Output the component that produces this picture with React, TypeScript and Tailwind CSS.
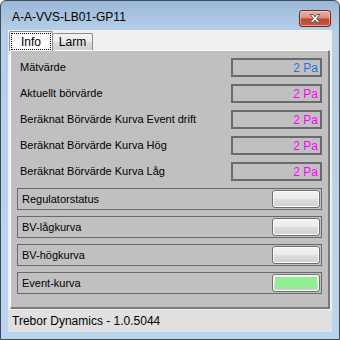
import React from 'react';

const valueRows = [
  { label: 'Mätvärde', value: '2 Pa', color: 'text-[#1c74e0]' },
  { label: 'Aktuellt börvärde', value: '2 Pa', color: 'text-[#ff00ff]' },
  { label: 'Beräknat Börvärde Kurva Event drift', value: '2 Pa', color: 'text-[#ff00ff]' },
  { label: 'Beräknat Börvärde Kurva Hög', value: '2 Pa', color: 'text-[#ff00ff]' },
  { label: 'Beräknat Börvärde Kurva Låg', value: '2 Pa', color: 'text-[#ff00ff]' },
];

const statusRows = [
  { label: 'Regulatorstatus', on: false },
  { label: 'BV-lågkurva', on: false },
  { label: 'BV-högkurva', on: false },
  { label: 'Event-kurva', on: true },
];

function CloseButton() {
  return (
    <div className="mr-[8px] mt-[9px] flex h-[17px] w-[32px] items-center justify-center rounded-[3px] border border-[#6f2a22] bg-[linear-gradient(to_bottom,#e8b5a8,#d88f7e_45%,#c2462e_55%,#c95a40)] shadow-[inset_0_0_0_1px_rgba(255,220,210,0.5)]">
      <svg width="14" height="11" viewBox="0 0 14 11">
        <path
          d="M2 1.5 L5 1.5 L7 4 L9 1.5 L12 1.5 L8.6 5.5 L12 9.5 L9 9.5 L7 7 L5 9.5 L2 9.5 L5.4 5.5 Z"
          fill="#ffffff"
          stroke="#5a5a5a"
          strokeWidth="1"
          strokeLinejoin="round"
        />
      </svg>
    </div>
  );
}

export default function App() {
  return (
    <div className="h-[340px] w-[340px] bg-white font-['Liberation_Sans',Arial,sans-serif]">
      <div className="flex h-[340px] w-[340px] flex-col rounded-t-[6px] border border-[#3d4a59] bg-[linear-gradient(to_bottom,#9bb8d8,#b6cfe9_30px,#bcd4ed_320px,#b3d6ef)]">
        {/* Title bar */}
        <div className="flex h-[29px] flex-none items-start">
          <span className="ml-[11px] mt-[9px] text-[12px] leading-[14px] text-black">A-A-VVS-LB01-GP11</span>
          <div className="ml-auto">
            <CloseButton />
          </div>
        </div>

        {/* Client area */}
        <div className="mx-[7px] flex h-[302px] flex-none flex-col bg-[#f0f0f0]">
          {/* Tabs */}
          <div className="flex h-[20px] flex-none items-end pl-[1px]">
            <div className="relative z-10 -mb-[1px] flex h-[20px] w-[44px] items-center justify-center rounded-t-[2px] border border-b-0 border-[#898c95] bg-[#fcfcfc] p-[1px]">
              <div className="flex h-full w-full items-center justify-center border border-dotted border-black text-[12px] text-black">
                Info
              </div>
            </div>
            <div className="flex h-[17px] w-[40px] items-center justify-center rounded-t-[2px] border border-b-0 border-l-0 border-[#898c95] bg-[linear-gradient(to_bottom,#f3f3f3,#ebebeb_50%,#dddddd_50%,#cfcfcf)] text-[12px] text-black">
              Larm
            </div>
          </div>

          {/* Tab page */}
          <div className="mx-[2px] flex h-[259px] flex-none flex-col border-l border-t border-r-2 border-b-2 border-l-white border-t-white border-r-[#7a7a7a] border-b-[#7a7a7a] bg-[#c0c0c0] pt-[7px]">
            <div className="flex flex-col gap-[7px]">
              {valueRows.map((r) => (
                <div key={r.label} className="flex h-[19px] items-center">
                  <span className="pl-[9px] text-[11px] text-black">{r.label}</span>
                  <div className="ml-auto mr-[6px] flex h-[19px] w-[91px] items-center justify-end border-2 border-[#6a6a6a] pr-[2px]">
                    <span className={`text-[12px] leading-none ${r.color}`}>{r.value}</span>
                  </div>
                </div>
              ))}
            </div>

            <div className="mt-[7px] flex flex-col gap-[6px] px-[6px]">
              {statusRows.map((r) => (
                <div key={r.label} className="flex h-[22px] items-center border border-[#6a6a6a]">
                  <span className="pl-[4px] text-[11px] text-black">{r.label}</span>
                  <div className="ml-auto mr-[1px] h-[18px] w-[48px] rounded-[3px] border border-[#707070] bg-[linear-gradient(to_bottom,#f2f2f2,#ebebeb_50%,#dddddd_50%,#cfcfcf)] p-[2px] shadow-[inset_0_0_0_1px_#fcfcfc]">
                    {r.on && <div className="h-full w-full bg-[#90ee90]" />}
                  </div>
                </div>
              ))}
            </div>
          </div>

          {/* Status strip */}
          <div className="mt-[1px] flex flex-1 items-center bg-[#e0e0e0] pl-[4px]">
            <span className="text-[12px] text-black">Trebor Dynamics - 1.0.5044</span>
          </div>
        </div>
      </div>
    </div>
  );
}
